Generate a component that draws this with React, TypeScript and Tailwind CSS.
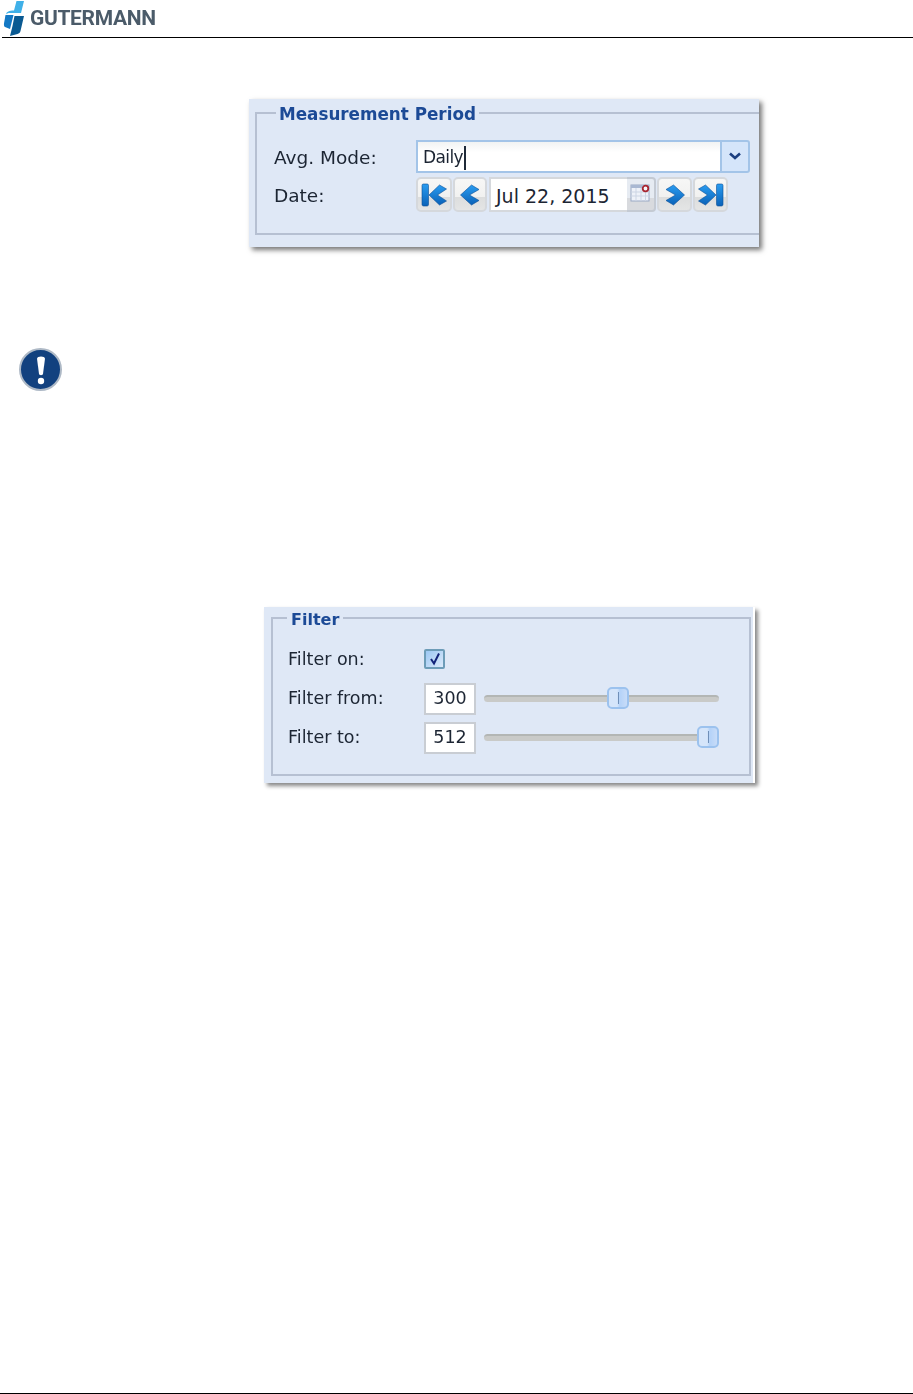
import React from 'react';

const sans = 'font-["DejaVu_Sans",sans-serif]';

const Logo = () => (
  <div className="flex items-start blur-[0.3px]">
    <svg width="26" height="37" viewBox="2 0 26 37" className="shrink-0">
      <path d="M16.5 1 H24 L21 13 H10 C8 13 6.5 13.5 6 14.5 C6.5 11.5 9 10.5 14 10.5 Z" fill="#3fb0e8" />
      <path d="M5.5 15 H13.5 L10 29 L5 27 C4 26.5 3.8 25 4 23.5 Z" fill="#1378c4" />
      <path d="M14.5 16 H24 L20.5 31 C20 33 19 33.5 17.5 34 L10 36 L12.5 26 Z" fill="#0a5a92" />
    </svg>
    <span className='ml-[2px] mt-[6px] text-[21px] font-bold leading-[24px] tracking-[-0.35px] text-[#4b5b69] font-["Roboto",sans-serif]'>
      GUTERMANN
    </span>
  </div>
);

const NavIcon = ({kind}: {kind: 'first' | 'prev' | 'next' | 'last'}) => {
  const flip = kind === 'next' || kind === 'last' ? 'scale(-1,1) translate(-28,0)' : undefined;
  const bar = kind === 'first' || kind === 'last';
  return (
    <svg width="28" height="26" viewBox="0 0 28 26">
      <defs>
        <linearGradient id={`nav-${kind}`} x1="0" y1="0" x2="0" y2="1">
          <stop offset="0" stopColor="#2a9cf0" />
          <stop offset="1" stopColor="#0a62b8" />
        </linearGradient>
      </defs>
      <g transform={flip} fill={`url(#nav-${kind})`} stroke="#0b4f96" strokeWidth="0.6" strokeLinejoin="round">
        {bar && <rect x="2" y="2" width="6.5" height="22" rx="1.4" />}
        <path
          d={
            bar
              ? 'M19.5 3 L26.5 7 L17.5 13 L26.5 19 L19.5 23 L9 13 Z'
              : 'M15.5 3 L23 7.5 L13.5 13 L23 18.5 L15.5 23 L4.5 13 Z'
          }
        />
      </g>
    </svg>
  );
};

const NavButton = ({kind, width}: {kind: 'first' | 'prev' | 'next' | 'last'; width: string}) => (
  <div
    className={`${width} h-[35px] flex items-center justify-center rounded-[5px] border-2 border-[#d5d8dc] bg-[linear-gradient(#f7f7f6_0%,#f1f1f0_58%,#dcdddd_58%,#e4e5e5_100%)]`}>
    <NavIcon kind={kind} />
  </div>
);

const CalendarIcon = () => (
  <svg width="21" height="20" viewBox="0 0 21 20">
    <rect x="1" y="2" width="18" height="16" fill="#eef2f9" stroke="#9aa9c4" />
    <rect x="1" y="2" width="18" height="3" fill="#a9b8d2" />
    <path d="M1 9 H19 M1 13 H19 M6 5 V18 M11 5 V18 M15.5 8 V18" stroke="#ccd5e4" strokeWidth="1" />
    <circle cx="15.5" cy="5.5" r="2.8" fill="#f4f6fa" stroke="#a82530" strokeWidth="1.8" />
  </svg>
);

const Slider = ({thumb}: {thumb: string}) => (
  <div className="relative ml-[8px] mb-[2px] w-[235px] h-[7px] rounded-full bg-[#c9cac8] border-t-2 border-[#b3b6b4]">
    <div
      className={`absolute ${thumb} top-[-10px] w-[22px] h-[22px] flex items-center justify-center rounded-[5px] border-2 border-[#9cc2ee] bg-[linear-gradient(90deg,#d5e5fa_0%,#d5e5fa_45%,#b4d2f8_60%,#c8dcf8_100%)]`}>
      <div className="w-px h-[12px] bg-[#6f8fb8]" />
    </div>
  </div>
);

export default function App() {
  return (
    <div className={`${sans} h-[1394px] flex flex-col bg-white text-[#1c2533] text-[16px] leading-none overflow-hidden`}>
      {/* Header */}
      <div className="ml-[2px] h-[38px] flex items-start border-b border-black">
        <Logo />
      </div>

      {/* Measurement period panel */}
      <div className="ml-[249px] mt-[61px] w-[510px] h-[148px] pl-[6px] pt-[4px] bg-[#dfe8f6] shadow-[3px_3px_5px_#777] blur-[0.4px]">
        <fieldset className="h-[132px] pl-[17px] border-2 border-r-0 border-[#b6c0d2]">
          <legend className="ml-[2px] px-[3px] h-[20px] leading-[23px] text-[16.8px] font-bold text-[#1c4a96]">Measurement Period</legend>
          <div className="mt-[17px] flex items-center">
            <span className="w-[142px] text-[18.5px] pt-[3px]">Avg. Mode:</span>
            <div className="w-[334px] h-[33px] flex">
              <div className="flex-1 flex items-center pl-[5px] pt-[2px] text-[17px] tracking-[-0.6px] bg-[linear-gradient(#f1f3f3_0%,#ffffff_35%)] border-2 border-r-0 border-[#a3c4e8]">
                Daily<span className="ml-[1px] w-[2px] h-[24px] bg-[#1f2a38]" />
              </div>
              <div className="w-[30px] flex items-center justify-center rounded-r-[3px] border-2 border-[#a3c4e8] bg-[#d5e5fa]">
                <svg width="14" height="9" viewBox="0 0 14 9">
                  <path d="M2 1.5 L7 6 L12 1.5" fill="none" stroke="#1c3f80" strokeWidth="2.6" />
                </svg>
              </div>
            </div>
          </div>
          <div className="mt-[4px] flex items-center">
            <span className="w-[142px] text-[18.5px] pt-[3px]">Date:</span>
            <div className="flex">
              <NavButton kind="first" width="w-[36px]" />
              <div className="ml-[1px]">
                <NavButton kind="prev" width="w-[34px]" />
              </div>
              <div className="ml-[2px] w-[138px] h-[35px] flex items-center pl-[5px] pt-[4px] text-[19px] bg-white border-2 border-[#d5d8dc] border-r-0">
                Jul 22, 2015
              </div>
              <div className="w-[29px] h-[35px] flex items-start justify-center pt-[4px] rounded-r-[4px] border-2 border-l-0 border-[#c4cad3] bg-[linear-gradient(#e6ebf2_0%,#e6ebf2_62%,#d8dade_62%)]">
                <CalendarIcon />
              </div>
              <div className="ml-[1px]">
                <NavButton kind="next" width="w-[35px]" />
              </div>
              <div className="ml-[1px]">
                <NavButton kind="last" width="w-[35px]" />
              </div>
            </div>
          </div>
        </fieldset>
      </div>

      {/* Note icon */}
      <div className="ml-[19px] mt-[101px] w-[43px] h-[43px] flex items-center justify-center rounded-full bg-[#12417f] border-2 border-[#aeb9c6] blur-[0.3px]">
        <svg width="12" height="30" viewBox="0 0 12 30">
          <path d="M2 3.5 C2 0.8 10 0.8 10 3.5 L8 19 C7.8 20.5 4.2 20.5 4 19 Z" fill="#fff" />
          <circle cx="6" cy="26" r="3.2" fill="#fff" />
        </svg>
      </div>

      {/* Filter panel */}
      <div className="ml-[264px] mt-[216px] w-[491px] h-[176px] pl-[7px] pr-[2px] pt-[2px] border-r-2 border-white bg-[#dfe8f6] shadow-[3px_3px_4px_#888] blur-[0.4px]">
        <fieldset className="h-[167px] pl-[15px] border-2 border-[#b6c0d2]">
          <legend className="ml-[-1px] px-[4px] h-[18px] leading-[22px] font-bold text-[#1c4a96]">Filter</legend>
          <div className="mt-[22px] h-[20px] flex items-center">
            <span className="w-[136px] text-[17.5px] pt-[2px]">Filter on:</span>
            <div className="w-[21px] h-[20px] flex items-center justify-center rounded-[2px] border-2 border-[#6d9cb8] bg-[linear-gradient(135deg,#9cc8f4_0%,#dbe9fa_100%)]">
              <svg width="14" height="14" viewBox="0 0 14 14">
                <path d="M3 7 L6 11.5 L11 1.5" fill="none" stroke="#14257a" strokeWidth="2" />
              </svg>
            </div>
          </div>
          <div className="mt-[14px] flex items-center">
            <span className="w-[136px] text-[17.5px]">Filter from:</span>
            <div className="w-[52px] h-[32px] flex items-center justify-center text-[17.5px] bg-white border-2 border-[#c9cdd3]">300</div>
            <Slider thumb="left-[123px]" />
          </div>
          <div className="mt-[7px] flex items-center">
            <span className="w-[136px] text-[17.5px]">Filter to:</span>
            <div className="w-[52px] h-[32px] flex items-center justify-center text-[17.5px] bg-white border-2 border-[#c9cdd3]">512</div>
            <Slider thumb="right-0" />
          </div>
        </fieldset>
      </div>

      {/* Footer line */}
      <div className="mt-auto h-px bg-black" />
    </div>
  );
}
